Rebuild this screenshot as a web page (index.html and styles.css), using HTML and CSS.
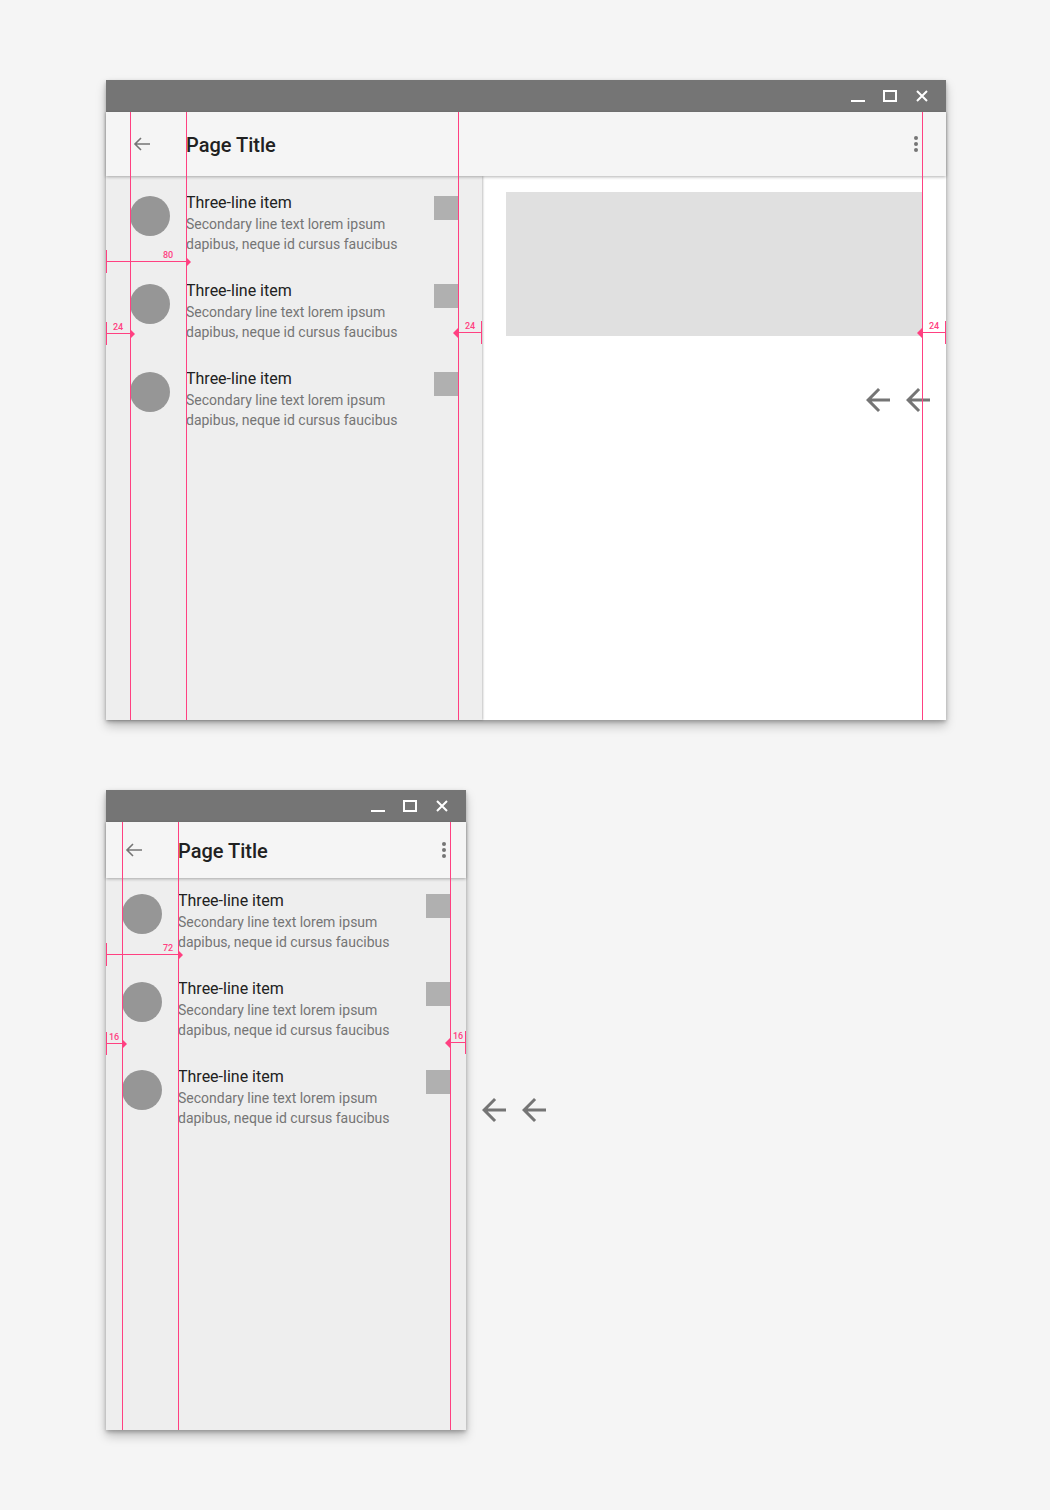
FILE: index.html
```html
<!DOCTYPE html>
<html lang="en">
<head>
<meta charset="utf-8">
<title>Keylines</title>
<link rel="stylesheet" href="styles.css">
</head>
<body>
<div class="canvas">

  <div class="window window-wide">
    <div class="titlebar">
      <svg class="ctl" width="14" height="12" viewBox="0 0 14 12"><rect x="0" y="10" width="14" height="2"/></svg>
      <svg class="ctl" width="14" height="12" viewBox="0 0 14 12"><rect x="1" y="1" width="12" height="10" fill="none" stroke="#fff" stroke-width="2"/></svg>
      <svg class="ctl ctl-close" width="12" height="12" viewBox="0 0 12 12"><path d="M1 1L11 11M11 1L1 11" stroke="#fff" stroke-width="2" fill="none"/></svg>
    </div>
    <div class="appbar">
      <svg class="nav-icon" width="24" height="24" viewBox="0 0 24 24"><path d="M20 12H5M11 6L5 12L11 18" fill="none" stroke="#757575" stroke-width="1.6"/></svg>
      <h1 class="page-title">Page Title</h1>
      <svg class="more-icon" width="24" height="24" viewBox="0 0 24 24"><circle cx="12" cy="6" r="2"/><circle cx="12" cy="12" r="2"/><circle cx="12" cy="18" r="2"/></svg>
    </div>
    <div class="content">
      <ul class="list-pane">
        <li class="list-item"><span class="avatar"></span><div class="item-text"><div class="item-title">Three-line item</div><div class="item-secondary">Secondary line text lorem ipsum<br>dapibus, neque id cursus faucibus</div></div><span class="item-meta"></span></li>
        <li class="list-item"><span class="avatar"></span><div class="item-text"><div class="item-title">Three-line item</div><div class="item-secondary">Secondary line text lorem ipsum<br>dapibus, neque id cursus faucibus</div></div><span class="item-meta"></span></li>
        <li class="list-item"><span class="avatar"></span><div class="item-text"><div class="item-title">Three-line item</div><div class="item-secondary">Secondary line text lorem ipsum<br>dapibus, neque id cursus faucibus</div></div><span class="item-meta"></span></li>
      </ul>
      <div class="detail-pane">
        <div class="placeholder"></div>
      </div>
    </div>

    <div class="arrow-pair arrows-wide">
      <svg width="36" height="36" viewBox="0 0 24 24"><path d="M20 11H7.83l5.59-5.59L12 4l-8 8 8 8 1.41-1.41L7.83 13H20v-2z"/></svg>
      <svg width="36" height="36" viewBox="0 0 24 24"><path d="M20 11H7.83l5.59-5.59L12 4l-8 8 8 8 1.41-1.41L7.83 13H20v-2z"/></svg>
    </div>

    <span class="keyline kw-24"></span>
    <span class="keyline kw-80"></span>
    <span class="keyline kw-352"></span>
    <span class="keyline kw-816"></span>

    <div class="dim dim-start dw-80"><span class="dim-label label-fixed">80</span></div>
    <div class="dim dim-start dw-24a"><span class="dim-label">24</span></div>
    <div class="dim dim-end dw-24b"><span class="dim-label">24</span></div>
    <div class="dim dim-end dw-24c"><span class="dim-label">24</span></div>
  </div>

  <div class="window window-narrow">
    <div class="titlebar">
      <svg class="ctl" width="14" height="12" viewBox="0 0 14 12"><rect x="0" y="10" width="14" height="2"/></svg>
      <svg class="ctl" width="14" height="12" viewBox="0 0 14 12"><rect x="1" y="1" width="12" height="10" fill="none" stroke="#fff" stroke-width="2"/></svg>
      <svg class="ctl ctl-close" width="12" height="12" viewBox="0 0 12 12"><path d="M1 1L11 11M11 1L1 11" stroke="#fff" stroke-width="2" fill="none"/></svg>
    </div>
    <div class="appbar">
      <svg class="nav-icon" width="24" height="24" viewBox="0 0 24 24"><path d="M20 12H5M11 6L5 12L11 18" fill="none" stroke="#757575" stroke-width="1.6"/></svg>
      <h1 class="page-title">Page Title</h1>
      <svg class="more-icon" width="24" height="24" viewBox="0 0 24 24"><circle cx="12" cy="6" r="2"/><circle cx="12" cy="12" r="2"/><circle cx="12" cy="18" r="2"/></svg>
    </div>
    <div class="content">
      <ul class="list-pane">
        <li class="list-item"><span class="avatar"></span><div class="item-text"><div class="item-title">Three-line item</div><div class="item-secondary">Secondary line text lorem ipsum<br>dapibus, neque id cursus faucibus</div></div><span class="item-meta"></span></li>
        <li class="list-item"><span class="avatar"></span><div class="item-text"><div class="item-title">Three-line item</div><div class="item-secondary">Secondary line text lorem ipsum<br>dapibus, neque id cursus faucibus</div></div><span class="item-meta"></span></li>
        <li class="list-item"><span class="avatar"></span><div class="item-text"><div class="item-title">Three-line item</div><div class="item-secondary">Secondary line text lorem ipsum<br>dapibus, neque id cursus faucibus</div></div><span class="item-meta"></span></li>
      </ul>
    </div>

    <div class="arrow-pair arrows-narrow">
      <svg width="36" height="36" viewBox="0 0 24 24"><path d="M20 11H7.83l5.59-5.59L12 4l-8 8 8 8 1.41-1.41L7.83 13H20v-2z"/></svg>
      <svg width="36" height="36" viewBox="0 0 24 24"><path d="M20 11H7.83l5.59-5.59L12 4l-8 8 8 8 1.41-1.41L7.83 13H20v-2z"/></svg>
    </div>

    <span class="keyline kn-16"></span>
    <span class="keyline kn-72"></span>
    <span class="keyline kn-344"></span>

    <div class="dim dim-start dn-72"><span class="dim-label label-fixed">72</span></div>
    <div class="dim dim-start dn-16a"><span class="dim-label">16</span></div>
    <div class="dim dim-end dn-16b"><span class="dim-label">16</span></div>
  </div>

</div>
</body>
</html>
```

FILE: styles.css
```css
* { box-sizing: border-box; }

html, body {
  margin: 0;
  padding: 0;
  background: #f5f5f5;
  font-family: Roboto, "Noto Sans", "Liberation Sans", sans-serif;
}

.canvas {
  padding: 80px 0 0 106px;
  height: 1510px;
}

/* ---------- window ---------- */
.window {
  position: relative;
  height: 640px;
  display: flex;
  flex-direction: column;
  background: #eeeeee;
  box-shadow: 0 6px 10px rgba(0, 0, 0, 0.22), 0 2px 4px rgba(0, 0, 0, 0.25);
}

.window-wide { width: 840px; }
.window-narrow { width: 360px; margin-top: 70px; }

.titlebar {
  height: 32px;
  flex: none;
  background: #757575;
  display: flex;
  align-items: center;
  justify-content: flex-end;
  gap: 18px;
  padding-right: 18px;
}

.ctl { display: block; fill: #fff; }
.ctl-close { margin-left: 1px; }

.appbar {
  position: relative;
  z-index: 2;
  flex: none;
  display: flex;
  align-items: center;
  background: #f5f5f5;
  box-shadow: 0 1px 3px rgba(0, 0, 0, 0.3);
}

.window-wide .appbar { height: 64px; padding: 0 18px 0 24px; }
.window-narrow .appbar { height: 56px; padding: 0 10px 0 16px; }

.nav-icon { display: block; flex: none; }
.more-icon { display: block; flex: none; fill: #757575; }

.page-title {
  flex: 1;
  margin: 2px 0 0 32px;
  font-size: 20px;
  font-weight: 500;
  color: #212121;
  line-height: 24px;
}

/* ---------- content ---------- */
.content {
  flex: 1;
  display: flex;
  min-height: 0;
}

.list-pane {
  margin: 0;
  padding: 0;
  list-style: none;
  background: #eeeeee;
  position: relative;
  z-index: 1;
}

.window-wide .list-pane {
  width: 376px;
  box-shadow: 1px 0 2px rgba(0, 0, 0, 0.25);
}
.window-narrow .list-pane { width: 100%; }

.list-item {
  height: 88px;
  display: flex;
  align-items: flex-start;
  gap: 16px;
  padding-top: 16px;
}
.window-wide .list-item { padding-left: 24px; padding-right: 24px; }
.window-narrow .list-item { padding-left: 16px; padding-right: 16px; padding-top: 12px; }

.avatar {
  flex: none;
  width: 40px;
  height: 40px;
  margin-top: 4px;
  border-radius: 50%;
  background: #969696;
}

.item-text { flex: 1; min-width: 0; }

.item-title {
  font-size: 16px;
  line-height: 22px;
  color: #212121;
  white-space: nowrap;
}

.item-secondary {
  font-size: 14px;
  line-height: 20px;
  color: #757575;
  white-space: nowrap;
}

.item-meta {
  flex: none;
  width: 24px;
  height: 24px;
  margin-top: 4px;
  background: #b0b0b0;
}

.detail-pane {
  flex: 1;
  background: #ffffff;
  padding: 16px 24px;
}

.placeholder {
  height: 144px;
  background: #e0e0e0;
}

/* ---------- floating arrows ---------- */
.arrow-pair {
  position: absolute;
  top: 302px;
  display: flex;
  gap: 4px;
  fill: #757575;
  z-index: 3;
}
.arrow-pair svg { display: block; }
.arrows-wide { left: 754px; }
.arrows-narrow { left: 370px; }

/* ---------- keylines ---------- */
.keyline {
  position: absolute;
  top: 32px;
  bottom: 0;
  width: 1px;
  background: #ff4081;
  z-index: 5;
}
.kw-24 { left: 24px; }
.kw-80 { left: 80px; }
.kw-352 { left: 352px; }
.kw-816 { left: 816px; }
.kn-16 { left: 16px; }
.kn-72 { left: 72px; }
.kn-344 { left: 344px; }

/* ---------- dimension markers ---------- */
.dim {
  position: absolute;
  height: 1px;
  background: #ff4081;
  z-index: 6;
}

.dim::before {
  content: "";
  position: absolute;
  top: -11px;
  width: 1px;
  height: 23px;
  background: #ff4081;
}

.dim::after {
  content: "";
  position: absolute;
  top: -4.5px;
  width: 0;
  height: 0;
  border-top: 5px solid transparent;
  border-bottom: 5px solid transparent;
}

.dim-start::before { left: 0; }
.dim-start::after { left: 100%; border-left: 5px solid #ff4081; }

.dim-end::before { right: 0; }
.dim-end::after { right: 100%; border-right: 5px solid #ff4081; }

.dim-label {
  position: absolute;
  top: -10px;
  left: 0;
  right: 0;
  text-align: center;
  font-size: 9px;
  line-height: 9px;
  font-weight: 500;
  color: #ff4081;
}

.label-fixed {
  left: 57px;
  right: auto;
  text-align: left;
}

.dw-80 { left: 0; top: 181px; width: 80px; }
.dw-24a { left: 0; top: 253px; width: 24px; }
.dw-24b { left: 352px; top: 252px; width: 24px; }
.dw-24c { left: 816px; top: 252px; width: 24px; }

.dn-72 { left: 0; top: 164px; width: 72px; }
.dn-16a { left: 0; top: 253px; width: 16px; }
.dn-16b { left: 344px; top: 252px; width: 16px; }
```
